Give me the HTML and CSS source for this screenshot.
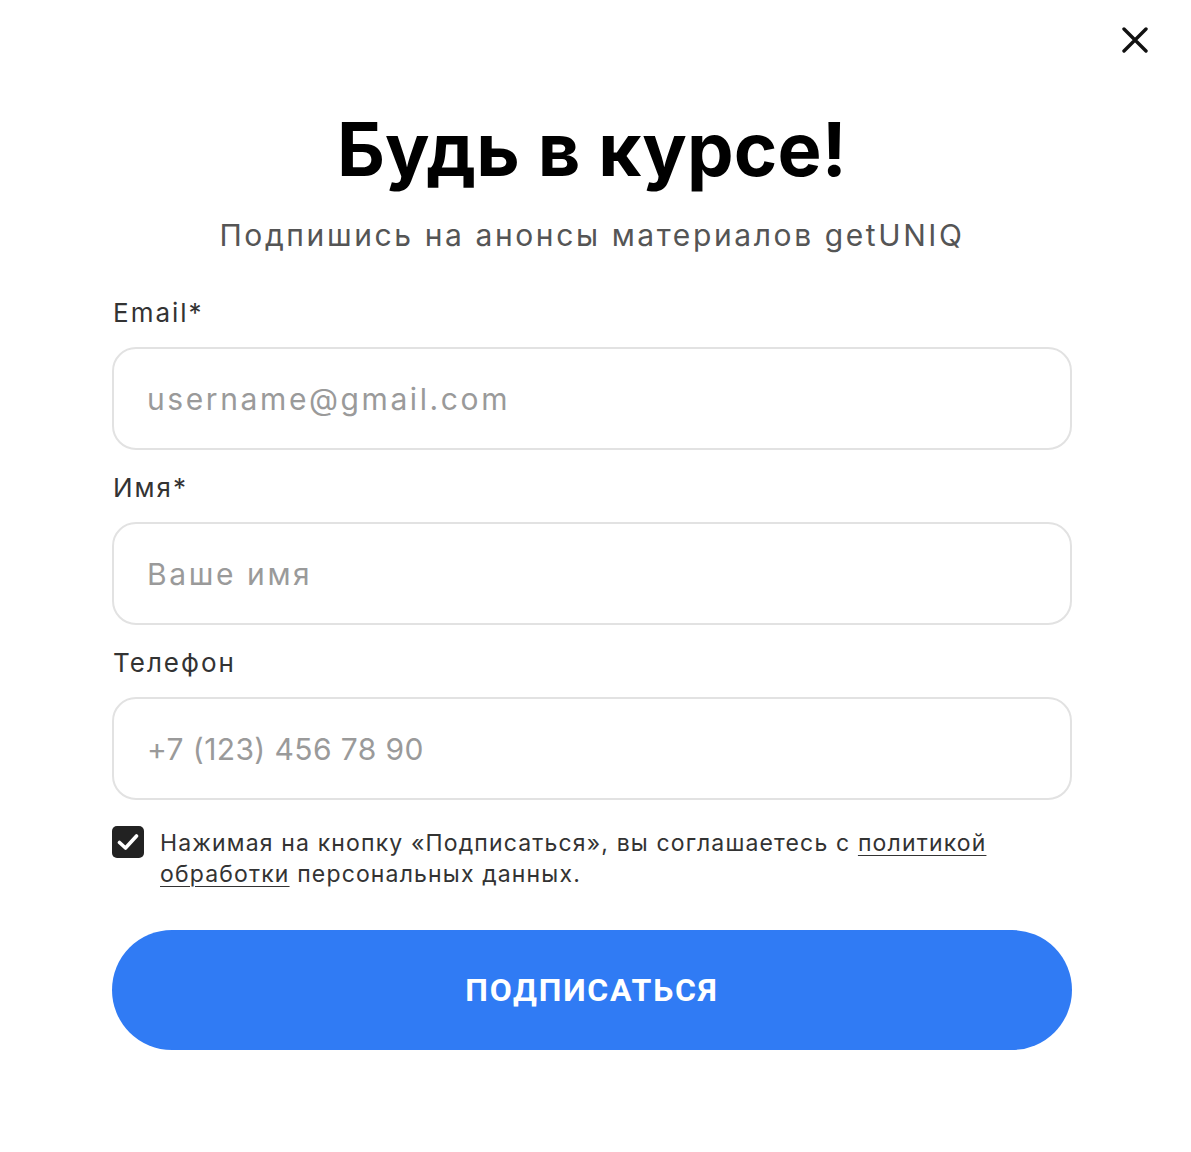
FILE: index.html
```html
<!DOCTYPE html>
<html lang="ru">
<head>
<meta charset="utf-8">
<title>Будь в курсе!</title>
<link rel="stylesheet" href="styles.css">
</head>
<body>
<div class="modal">
  <button class="close" aria-label="Закрыть">
    <svg width="26" height="26" viewBox="0 0 26 26"><path d="M2 2 L24 24 M24 2 L2 24" stroke="#111" stroke-width="3.4" stroke-linecap="round"/></svg>
  </button>
  <h1 class="title">Будь в курсе!</h1>
  <p class="subtitle">Подпишись на анонсы материалов getUNIQ</p>
  <form class="form">
    <label class="field">
      <span class="label">Email*</span>
      <input class="input" type="email" placeholder="username@gmail.com">
    </label>
    <label class="field">
      <span class="label">Имя*</span>
      <input class="input" type="text" placeholder="Ваше имя">
    </label>
    <label class="field">
      <span class="label">Телефон</span>
      <input class="input input-phone" type="tel" placeholder="+7 (123) 456 78 90">
    </label>
    <div class="agree">
      <span class="check">
        <svg width="22" height="18" viewBox="0 0 22 18"><path d="M2.5 9.5 L8.5 15 L19.5 3" fill="none" stroke="#fff" stroke-width="3.6" stroke-linecap="round" stroke-linejoin="round"/></svg>
      </span>
      <p class="agree-text">Нажимая на кнопку «Подписаться», вы соглашаетесь с <a href="#">политикой обработки</a> персональных данных.</p>
    </div>
    <button class="submit" type="button">ПОДПИСАТЬСЯ</button>
  </form>
</div>
</body>
</html>
```
FILE: styles.css
```css
html, body {
  margin: 0;
  padding: 0;
  background: #fff;
}
body {
  font-family: "Inter", "Noto Sans", sans-serif;
  color: #333;
}
.modal {
  position: relative;
  width: 1184px;
  box-sizing: border-box;
  padding: 104px 112px 100px;
}
.close {
  position: absolute;
  top: 27px;
  right: 36px;
  width: 26px;
  height: 26px;
  padding: 0;
  border: 0;
  background: none;
  display: flex;
}
.title {
  margin: 0;
  text-align: center;
  font-size: 74px;
  line-height: 90px;
  font-weight: 700;
  color: #000;
  letter-spacing: 0.2px;
}
.subtitle {
  margin: 21px 0 0;
  text-align: center;
  font-size: 30px;
  line-height: 40px;
  color: #555;
  letter-spacing: 2.6px;
}
.form {
  margin-top: 42px;
  display: flex;
  flex-direction: column;
}
.field {
  display: flex;
  flex-direction: column;
  margin-bottom: 22px;
}
.label {
  font-size: 26px;
  line-height: 32px;
  color: #333;
  margin-bottom: 18px;
  padding-left: 1px;
  letter-spacing: 2px;
}
.input {
  height: 103px;
  box-sizing: border-box;
  border: 2px solid #e2e2e2;
  border-radius: 24px;
  padding: 0 33px;
  font-family: inherit;
  font-size: 30px;
  color: #333;
  outline: none;
  letter-spacing: 2.6px;
}
.input-phone {
  letter-spacing: 0.4px;
}
.input::placeholder {
  color: #9a9a9a;
}
.agree {
  display: flex;
  gap: 16px;
  align-items: flex-start;
  margin-top: 4px;
}
.check {
  flex: none;
  width: 32px;
  height: 32px;
  border-radius: 5px;
  background: #222;
  display: flex;
  align-items: center;
  justify-content: center;
}
.agree-text {
  margin: 2px 0 0;
  font-size: 23px;
  line-height: 31px;
  color: #333;
  max-width: 880px;
  letter-spacing: 1.15px;
}
.agree-text a {
  color: #333;
  text-decoration: underline;
  text-decoration-thickness: 1px;
  text-underline-offset: 4px;
}
.submit {
  margin-top: 40px;
  height: 120px;
  border: 0;
  border-radius: 60px;
  background: #307bf4;
  color: #fff;
  font-family: "Roboto", "Liberation Sans", sans-serif;
  font-weight: 700;
  font-size: 32px;
  letter-spacing: 1.8px;
}
```
